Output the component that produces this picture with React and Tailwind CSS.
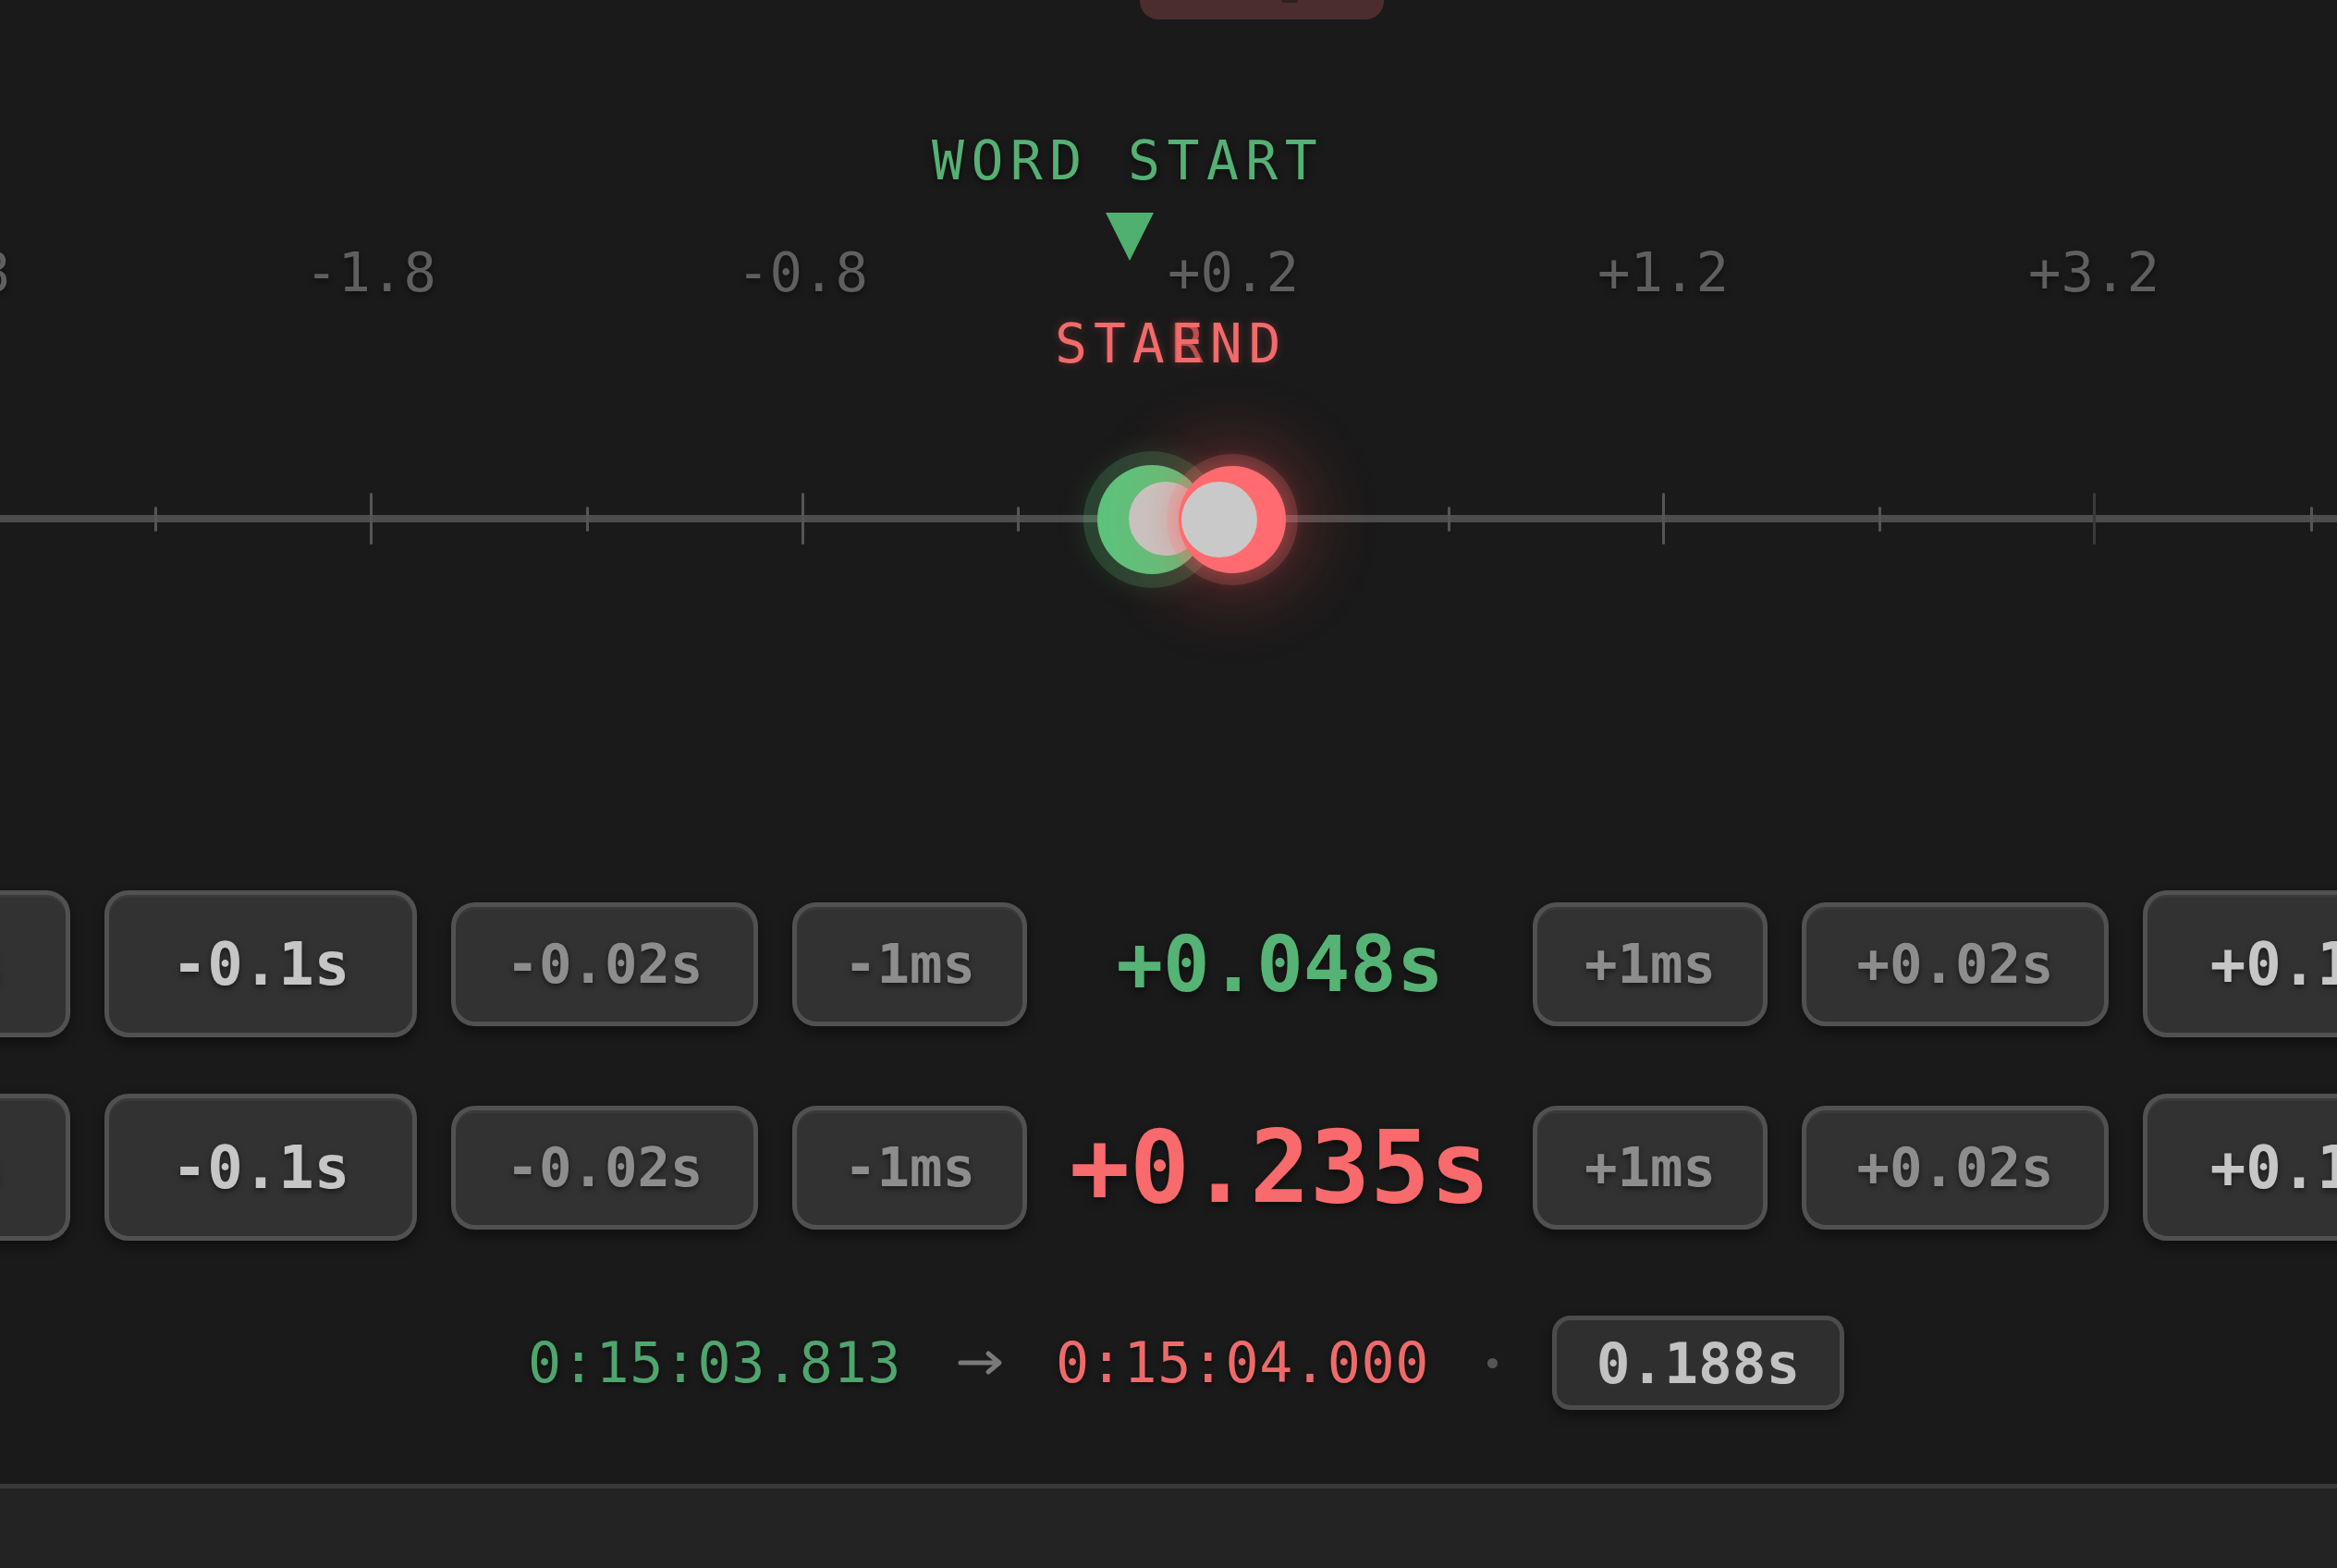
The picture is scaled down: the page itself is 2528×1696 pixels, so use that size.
import React from "react";

const MONO = "font-['DejaVu_Sans_Mono','Liberation_Mono',monospace]";

const majors = [
  { x: -60, label: "-2.8" },
  { x: 401, label: "-1.8" },
  { x: 868, label: "-0.8" },
  { x: 1334, label: "+0.2" },
  { x: 1799, label: "+1.2" },
  { x: 2265, label: "+3.2" },
];
const minors = [168, 635, 1101, 1567, 2033, 2500];

function Btn({ label, big, w }) {
  return (
    <div
      className={
        "flex shrink-0 items-center justify-center rounded-[26px] border-[5px] border-[#515151] bg-[#323232] font-bold leading-none shadow-[inset_0_3px_0_rgba(255,255,255,0.04),0_6px_14px_rgba(0,0,0,0.45)] [text-shadow:0_3px_6px_rgba(0,0,0,0.5)] " +
        w +
        (big
          ? " h-[159px] text-[64px] text-[#c6c6c6]"
          : " h-[134px] text-[59px] text-[#8d8d8d]")
      }
    >
      {label}
    </div>
  );
}

function Row({ value, valueClass }) {
  return (
    <div className="ml-[-262px] flex h-[159px] items-center gap-[37px]">
      <Btn label="-0.5s" big w="w-[338px]" />
      <Btn label="-0.1s" big w="w-[338px]" />
      <Btn label="-0.02s" w="w-[332px]" />
      <Btn label="-1ms" w="w-[254px]" />
      <div
        className={
          "flex w-[473px] shrink-0 items-center justify-center font-bold leading-none [text-shadow:0_4px_10px_rgba(0,0,0,0.5)] " +
          valueClass
        }
      >
        {value}
      </div>
      <Btn label="+1ms" w="w-[254px]" />
      <Btn label="+0.02s" w="w-[332px]" />
      <Btn label="+0.1s" big w="w-[338px]" />
      <Btn label="+0.5s" big w="w-[338px]" />
    </div>
  );
}

export default function App() {
  return (
    <div
      className={
        "flex h-[1696px] w-[2528px] flex-col overflow-hidden bg-[#1a1a1a] " + MONO
      }
    >
      {/* Timeline canvas */}
      <div className="relative h-[700px] w-full shrink-0">
        <div className="ml-[1233px] flex h-[21px] w-[264px] justify-center rounded-b-[20px] bg-[#4b2d2d]">
          <div className="ml-[60px] h-[3px] w-[18px] rounded-b-full bg-[#2e2020]" />
        </div>

        {/* WORD START label */}
        <div className="absolute left-[1008px] top-[145px] text-[58px] leading-none tracking-[7.5px] text-[#55b074] [text-shadow:0_3px_8px_rgba(0,0,0,0.6)]">
          WORD START
        </div>
        <svg
          className="absolute left-[1196px] top-[230px]"
          width="52"
          height="52"
          viewBox="0 0 52 52"
        >
          <polygon points="0,0 52,0 26,52" fill="#4fb070" />
        </svg>

        {/* tick labels */}
        {majors.map((m) => (
          <div
            key={m.label}
            className="absolute top-[265px] w-[200px] text-center text-[59px] leading-none text-[#5f5f5f] [text-shadow:0_3px_6px_rgba(0,0,0,0.5)]"
            style={{ left: m.x - 100 }}
          >
            {m.label}
          </div>
        ))}

        {/* END label (overlapping START) */}
        <div className="absolute left-[1141px] top-[343px] flex text-[58px] leading-none tracking-[7px] text-[#f26a6a] [text-shadow:0_0_10px_rgba(255,90,90,0.3)]">
          <span>STA</span>
          <span className="relative">
            <span className="absolute left-0 top-0 text-[#e25b5b] opacity-80">R</span>
            <span className="relative">E</span>
          </span>
          <span>ND</span>
        </div>

        {/* track line */}
        <div className="absolute left-0 top-[557px] h-[8px] w-full bg-[#4d4d4d]" />
        {majors.slice(1).map((m, i) => (
          <div
            key={"M" + m.x}
            className={
              "absolute top-[533px] h-[56px] w-[3px] rounded-full " +
              (i === 4 ? "bg-[#3a3a3a]" : "bg-[#555555]")
            }
            style={{ left: m.x - 1 }}
          />
        ))}
        {minors.map((x) => (
          <div
            key={"m" + x}
            className="absolute top-[548px] h-[27px] w-[3px] rounded-full bg-[#555555]"
            style={{ left: x - 1 }}
          />
        ))}

        {/* start marker (green) */}
        <div className="absolute left-[1172px] top-[488px] h-[148px] w-[148px] rounded-full bg-[#5bc27b]/25 shadow-[0_0_30px_rgba(80,190,110,0.15)]" />
        <div className="absolute left-[1187px] top-[503px] h-[118px] w-[118px] rounded-full bg-[#5cc47c]" />
        <div className="absolute left-[1221px] top-[521px] h-[80px] w-[80px] rounded-full bg-[#cacaca]/95" />

        {/* end marker (red) */}
        <div className="absolute left-[1262px] top-[491px] h-[142px] w-[142px] rounded-full bg-[#ff6b6e]/30 shadow-[0_0_70px_20px_rgba(255,80,80,0.22)]" />
        <div className="absolute left-[1275px] top-[504px] h-[116px] w-[116px] rounded-full bg-[#ff6b6e] shadow-[0_0_24px_rgba(255,90,90,0.5)]" />
        <div className="absolute left-[1278px] top-[521px] h-[82px] w-[82px] rounded-full bg-[#c9c9c9]" />
      </div>

      {/* nudge rows */}
      <div className="mt-[263px] flex flex-col gap-[61px]">
        <Row value="+0.048s" valueClass="text-[84px] text-[#55b375]" />
        <Row value="+0.235s" valueClass="text-[108px] text-[#f86a6b]" />
      </div>

      {/* summary row */}
      <div className="mt-[81px] flex h-[102px] items-center">
        <span className="ml-[571px] text-[60px] leading-none tracking-[0.6px] text-[#4fa56e] [text-shadow:0_3px_6px_rgba(0,0,0,0.5)]">
          0:15:03.813
        </span>
        <svg className="ml-[61px]" width="50" height="28" viewBox="0 0 50 28">
          <path
            d="M3 14 H44 M33 4 L45 14 L33 24"
            stroke="#7a7a7a"
            strokeWidth="5"
            fill="none"
            strokeLinecap="round"
            strokeLinejoin="round"
          />
        </svg>
        <span className="ml-[56px] text-[60px] leading-none tracking-[0.6px] text-[#ee6a6a] [text-shadow:0_3px_6px_rgba(0,0,0,0.5)]">
          0:15:04.000
        </span>
        <span className="ml-[63px] h-[11px] w-[11px] rounded-full bg-[#555555]" />
        <div className="ml-[59px] flex h-[102px] w-[316px] items-center justify-center rounded-[20px] border-[5px] border-[#4c4c4c] bg-[#2f2f2f] text-[61px] font-bold leading-none text-[#c2c2c2] shadow-[0_6px_14px_rgba(0,0,0,0.45)]">
          0.188s
        </div>
      </div>

      <div className="mt-[80px] h-[5px] w-full shrink-0 bg-[#3a3a3a]" />
      <div className="w-full flex-1 bg-[#232323]" />
    </div>
  );
}
